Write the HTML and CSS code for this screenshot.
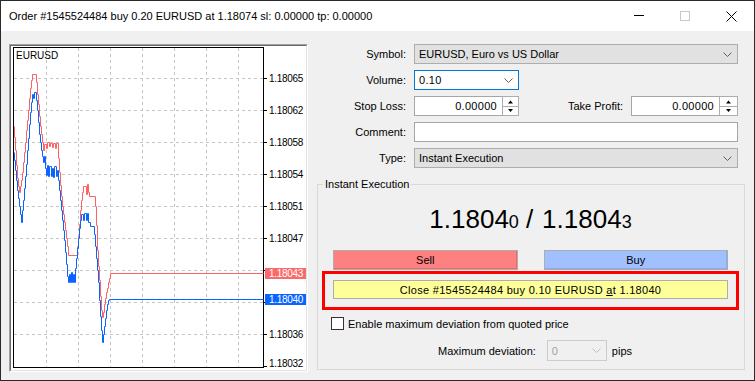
FILE: index.html
```html
<!DOCTYPE html>
<html lang="en">
<head>
    <meta charset="UTF-8">
    <meta name="viewport" content="width=device-width, initial-scale=1.0">
    <title>Order</title>
    <link rel="stylesheet" href="styles.css">
</head>
<body>
    <div class="window">
        <div class="titlebar">
            <span class="title">Order #1545524484 buy 0.20 EURUSD at 1.18074 sl: 0.00000 tp: 0.00000</span>
            <div class="caption">
                <span class="cap-btn"><svg width="10" height="10"><path d="M0 4.5H10" stroke="#000"/></svg></span>
                <span class="cap-btn"><svg width="10" height="10"><rect x=".5" y=".5" width="9" height="9" fill="none" stroke="#c8c8c8"/></svg></span>
                <span class="cap-btn close"><svg width="11" height="11"><path d="M0.5 0.5L10.5 10.5M10.5 0.5L0.5 10.5" stroke="#000"/></svg></span>
            </div>
        </div>

        <div class="content">
            <div class="chart-panel">
                <div class="chart-inner">
                    <svg class="chart" width="295" height="324" viewBox="11 46 295 324">
                        <g class="grid">
                            <path d="M14 78.5H263M14 110.5H263M14 142.5H263M14 174.5H263M14 206.5H263M14 238.5H263M14 270.5H263M14 302.5H263M14 334.5H263"/>
                            <path d="M46.5 48V367M78.5 48V367M110.5 48V367M142.5 48V367M174.5 48V367M206.5 48V367M238.5 48V367"/>
                        </g>
                        <path class="ticks" d="M264 78.5H267M264 110.5H267M264 142.5H267M264 174.5H267M264 206.5H267M264 238.5H267M264 270.5H267M264 302.5H267M264 334.5H267M264 366.5H267"/>
                        <rect x="13.5" y="47.5" width="250" height="320" fill="none" stroke="#000"/>
                        <text class="sym" x="16" y="59">EURUSD</text>
                        <g class="axis">
                            <text x="269" y="82">1.18065</text>
                            <text x="269" y="114">1.18062</text>
                            <text x="269" y="146">1.18058</text>
                            <text x="269" y="178">1.18054</text>
                            <text x="269" y="210">1.18051</text>
                            <text x="269" y="242">1.18047</text>
                            <text x="269" y="338">1.18036</text>
                            <text x="269" y="367">1.18032</text>
                        </g>
                        <g transform="translate(0.5 0.5)">
                            <path class="ask" d="M14 126 V137 H15 V150 H16 V165 H17 V178 H18 V186 H19 V192 H20 V186 H21 V180 H22 V172 H23 V162 H24 V152 H25 V142 H26 V130 H27 V120 H28 V110 H29 V98 H30 V88 H31 V80 H32 V74 H36 V82 H37 V94 H38 V104 H39 V116 H40 V126 H41 V134 H42 V142 H43 V150 H44 V144 H46 V148 H47 V142 H49 V146 H50 V143 H52 V147 H53 V143 H55 V148 H56 V143 H58 V158 H59 V172 H60 V185 H61 V196 H62 V206 H63 V214 H64 V222 H65 V230 H66 V238 H67 V246 H68 V255 H77 V246 H78 V236 H79 V224 H80 V210 H81 V200 H82 V192 H83 V186 H86 V194 H87 V184 H88 V192 H89 V196 H95 V206 H96 V225 H97 V250 H98 V266 H99 V280 H100 V296 H101 V310 H102 V317 H103 V312 H104 V304 H105 V298 H106 V292 H107 V288 H108 V282 H109 V278 H110 V273 H263"/>
                            <path class="bid" d="M14 152 V160 H15 V170 H16 V180 H17 V190 H18 V198 H19 V206 H20 V214 H21 V222 H22 V210 H23 V200 H24 V188 H25 V176 H26 V164 H27 V150 H28 V138 H29 V124 H30 V112 H31 V102 H32 V94 H33 V98 H34 V92 H36 V100 H37 V110 H38 V122 H39 V134 H40 V142 H41 V150 H42 V156 H43 V162 H44 V156 H45 V168 H46 V175 H47 V165 H48 V176 H49 V166 H51 V176 H52 V168 H53 V177 H54 V166 H56 V176 H57 V170 H58 V180 H59 V190 H60 V200 H61 V210 H62 V220 H63 V230 H64 V240 H65 V252 H66 V264 H67 V276 H68 V282 H69 V274 H70 V282 H71 V272 H72 V282 H73 V274 H74 V282 H75 V268 H76 V258 H77 V248 H78 V238 H79 V228 H80 V220 H81 V214 H83 V220 H84 V213 H86 V220 H87 V213 H88 V222 H90 V226 H94 V234 H95 V246 H96 V258 H97 V270 H98 V282 H99 V300 H100 V316 H101 V330 H102 V342 H103 V334 H104 V326 H105 V318 H106 V310 H107 V304 H108 V300 H109 V299 H263"/>
                        </g>
                        <rect class="ask-tag" x="265" y="268" width="41" height="11"/>
                        <text class="tag" x="269" y="277">1.18043</text>
                        <rect class="bid-tag" x="265" y="294" width="41" height="11"/>
                        <text class="tag" x="269" y="303">1.18040</text>
                    </svg>
                </div>
            </div>

            <div class="order-panel">
                <div class="form">
                    <label>Symbol:</label>
                    <div class="combo">
                        <span>EURUSD, Euro vs US Dollar</span>
                        <svg class="chevron" width="9" height="5"><path d="M0.5 0.5L4.5 4.5L8.5 0.5" fill="none" stroke="#606060"/></svg>
                    </div>

                    <label>Volume:</label>
                    <div class="combo volume">
                        <span class="mono">0.10</span>
                        <svg class="chevron" width="9" height="5"><path d="M0.5 0.5L4.5 4.5L8.5 0.5" fill="none" stroke="#606060"/></svg>
                    </div>

                    <label>Stop Loss:</label>
                    <div class="pair">
                        <div class="spin sl">
                            <div class="edit"><span class="mono">0.00000</span></div>
                            <svg class="spinner" width="17" height="20"><rect x=".5" y=".5" width="16" height="19" fill="#fff" stroke="#adadad"/><path d="M1 10.5H16" stroke="#adadad"/><path d="M6 7.5L8.5 4.5L11 7.5Z M6 13L8.5 16L11 13Z" fill="#000"/></svg>
                        </div>
                        <label class="tp-label">Take Profit:</label>
                        <div class="spin tp">
                            <div class="edit"><span class="mono">0.00000</span></div>
                            <svg class="spinner" width="19" height="20"><rect x=".5" y=".5" width="18" height="19" fill="#fff" stroke="#adadad"/><path d="M1 10.5H18" stroke="#adadad"/><path d="M7 7.5L9.5 4.5L12 7.5Z M7 13L9.5 16L12 13Z" fill="#000"/></svg>
                        </div>
                    </div>

                    <label>Comment:</label>
                    <div class="edit comment"></div>

                    <label>Type:</label>
                    <div class="combo">
                        <span>Instant Execution</span>
                        <svg class="chevron" width="9" height="5"><path d="M0.5 0.5L4.5 4.5L8.5 0.5" fill="none" stroke="#606060"/></svg>
                    </div>
                </div>

                <fieldset class="group">
                    <legend>Instant Execution</legend>
                    <div class="quote">1.1804<small>0</small><span class="slash">/</span>1.1804<small>3</small></div>

                    <div class="trade-buttons">
                        <button class="btn sell">Sell</button>
                        <button class="btn buy">Buy</button>
                    </div>

                    <div class="close-box">
                        <button class="btn close-btn mono">Close #1545524484 buy 0.10 EURUSD <u>a</u>t 1.18040</button>
                    </div>

                    <div class="check-row">
                        <span class="checkbox"></span>
                        <span>Enable maximum deviation from quoted price</span>
                    </div>

                    <div class="deviation-row">
                        <span>Maximum deviation:</span>
                        <div class="combo disabled">
                            <span class="value mono">0</span>
                            <svg class="chevron" width="9" height="5"><path d="M0.5 0.5L4.5 4.5L8.5 0.5" fill="none" stroke="#c0c0c0"/></svg>
                        </div>
                        <span>pips</span>
                    </div>
                </fieldset>
            </div>
        </div>
    </div>
</body>
</html>
```

FILE: styles.css
```css
body {
    margin: 0;
    font-family: "Liberation Sans", Arial, sans-serif;
    font-size: 11px;
    color: #000;
}
.window {
    width: 755px;
    height: 381px;
    box-sizing: border-box;
    border: 1px solid #2b2b2b;
    background: #f0f0f0;
    display: flex;
    flex-direction: column;
}
.titlebar {
    height: 30px;
    background: #fff;
    display: flex;
    align-items: center;
    flex-shrink: 0;
}
.title {
    padding-left: 8px;
    font-size: 11px;
}
.caption {
    margin-left: auto;
    display: flex;
    height: 30px;
}
.cap-btn {
    width: 46px;
    display: flex;
    align-items: center;
    justify-content: center;
}
.cap-btn svg {
    display: block;
}
.content {
    flex: 1;
    display: flex;
    padding: 13px 0 0 8px;
}

/* chart */
.chart-panel {
    width: 299px;
    height: 328px;
    box-sizing: border-box;
    border: 1px solid;
    border-color: #a0a0a0 #fff #fff #a0a0a0;
}
.chart-inner {
    height: 100%;
    box-sizing: border-box;
    border: 1px solid;
    border-color: #696969 #e3e3e3 #e3e3e3 #696969;
    background: #fff;
}
.chart {
    display: block;
}
.grid path {
    stroke: #c4c4c4;
    stroke-dasharray: 3 3;
    fill: none;
}
.ticks {
    stroke: #000;
}
.chart text {
    font-family: "Liberation Sans", Arial, sans-serif;
    font-size: 10px;
    letter-spacing: -0.3px;
    fill: #000;
}
.chart .sym {
    letter-spacing: 0;
}
.ask, .bid {
    fill: none;
    stroke-width: 1;
}
.ask {
    stroke: #ff6262;
}
.bid {
    stroke: #0a64ff;
}
.ask-tag {
    fill: #fb6a6a;
}
.bid-tag {
    fill: #0a64ff;
}
.chart .tag {
    fill: #fff;
}

/* order form */
.order-panel {
    margin-left: 9px;
    width: 428px;
}
.form {
    display: grid;
    grid-template-columns: 89px 324px;
    grid-auto-rows: 20px;
    column-gap: 8px;
    row-gap: 6px;
    align-items: center;
}
.form label {
    text-align: right;
}
.combo {
    height: 20px;
    box-sizing: border-box;
    border: 1px solid #adadad;
    background: #e1e1e1;
    display: flex;
    align-items: center;
    padding-left: 4px;
}
.chevron {
    margin-left: auto;
    margin-right: 5px;
    display: block;
}
.combo.volume {
    width: 105px;
    border-color: #0078d7;
    background: #fff;
}
.mono {
    letter-spacing: 0.3px;
}
.edit {
    height: 20px;
    box-sizing: border-box;
    border: 1px solid #a6a6a6;
    background: #fff;
    display: flex;
    align-items: center;
    justify-content: flex-end;
    padding-right: 5px;
    flex: 1;
}
.pair {
    display: flex;
    align-items: center;
}
.spin {
    display: flex;
}
.spin .spinner {
    display: block;
    margin-left: -1px;
}
.spin.sl {
    width: 105px;
}
.spin.tp {
    width: 107px;
}
.pair .tp-label {
    flex: 1;
    margin-right: 8px;
}
.comment {
    padding: 0;
}

/* instant execution group */
.group {
    margin: 10px 0 0;
    padding: 0 5px 8px 4px;
    border: 1px solid #d9d9d9;
    min-inline-size: auto;
}
.group legend {
    margin-left: 1px;
    padding: 0 2px;
    line-height: 13px;
}
.quote {
    margin-top: 13px;
    text-align: center;
    font-size: 26px;
    line-height: 30px;
}
.quote small {
    font-size: 18px;
}
.quote .slash {
    margin: 0 9px 0 7px;
}
.trade-buttons {
    margin-top: 13px;
    padding: 0 11px;
    display: flex;
    gap: 26px;
}
.btn {
    font-family: inherit;
    font-size: 11px;
    height: 20px;
    padding: 0;
    border: 1px solid #adadad;
    color: #000;
}
.sell, .buy {
    width: 185px;
}
.sell {
    background: #ff8080;
    box-shadow: inset -1px -1px 0 #e86a6a;
}
.buy {
    background: #a0c0ff;
    box-shadow: inset -1px -1px 0 #88aaf0;
}
.close-box {
    margin-top: 1px;
    border: 3px solid #f00;
    padding: 6px 8px 8px;
}
.close-btn {
    width: 100%;
    height: 19px;
    display: block;
    background: #ffff99;
}
.check-row {
    margin-top: 7px;
    padding-left: 9px;
    display: flex;
    align-items: center;
    gap: 4px;
    height: 13px;
}
.checkbox {
    width: 13px;
    height: 13px;
    box-sizing: border-box;
    border: 1px solid #333;
    background: #fff;
}
.deviation-row {
    margin-top: 10px;
    padding-left: 116px;
    display: flex;
    align-items: center;
    height: 21px;
}
.combo.disabled {
    width: 60px;
    height: 21px;
    margin: 0 5px 0 11px;
    border-color: #cccccc;
    background: #f0f0f0;
}
.combo.disabled .value {
    color: #a0a0a0;
}
```
